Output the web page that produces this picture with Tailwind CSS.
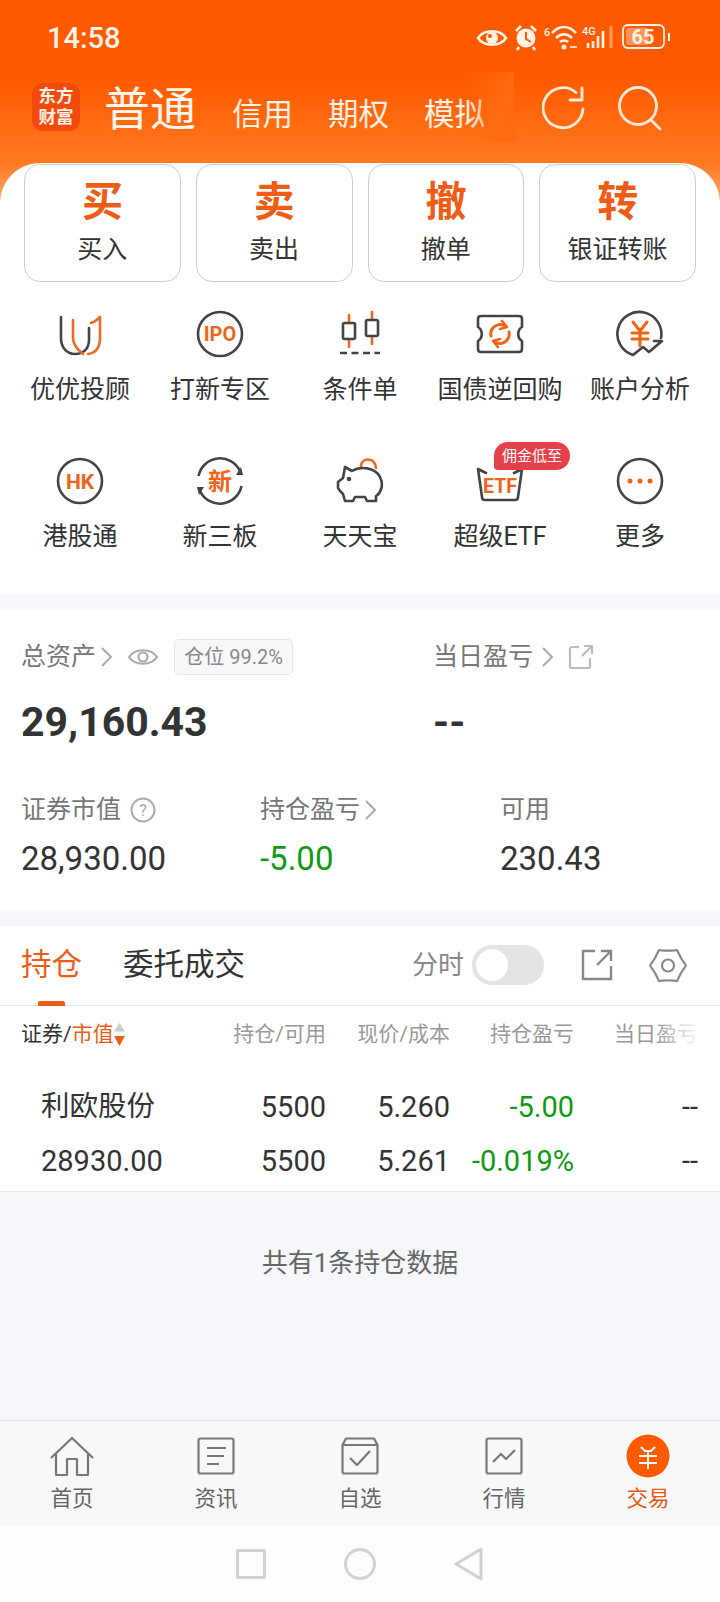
<!DOCTYPE html>
<html lang="en">
  <head>
    <meta charset="UTF-8">
    <meta name="viewport" content="width=device-width, initial-scale=1.0">
    <title>交易</title>
    <script src="https://cdn.jsdelivr.net/npm/@tailwindcss/browser@4"></script>
  </head>

  <body class="bg-white">
    <div class="flex flex-col w-[720px] h-[1602px] overflow-hidden bg-[#f6f7fa] text-[#333] font-['Roboto','Noto_Sans_CJK_SC',sans-serif]">

      <!-- Orange header -->
      <header class="h-[200px] shrink-0 bg-[linear-gradient(180deg,#ff5900_0%,#ff5a00_40%,#ff7a22_82%,#ffa868_100%)] text-white">
        <!-- status bar -->
        <div class="flex items-center justify-between h-[75px] pl-[47px] pr-[48px]">
          <span class="text-[29px] leading-[34px] font-medium text-[#fff3e8]">14:58</span>
          <svg class="w-[200px] h-[32px]" viewBox="472 22 200 32" fill="none" stroke="#fff3e8" stroke-width="2.6">
            <path d="M478 38C484 29 500 29 506 38C500 47 484 47 478 38Z"/>
            <circle cx="492" cy="38" r="6" fill="#fff3e8" stroke="none"/>
            <circle cx="490" cy="36" r="2" fill="#ff5a00" stroke="none"/>
            <circle cx="526" cy="38" r="9.5" fill="#fff3e8" stroke="none"/>
            <path d="M526 32V39L531 42" stroke="#ff5a00" stroke-width="2"/>
            <path d="M516 31L521 26M536 31L531 26M519 47L517 50M533 47L535 50"/>
            <text x="544" y="36" font-size="11" font-weight="500" fill="#fff3e8" stroke="none">6</text>
            <path d="M552 33C559 25 569 25 576 33M556 38C561 33 567 33 572 38M560 42C562 40 566 40 568 42"/>
            <circle cx="564" cy="47" r="2.5" fill="#fff3e8" stroke="none"/>
            <path d="M570 47H577" stroke-width="1.6"/>
            <text x="582" y="35" font-size="11" font-weight="500" fill="#fff3e8" stroke="none">4G</text>
            <path d="M588 43V48M593 41V48M598 36V48M603 31V48"/>
            <path d="M611 26V48" stroke="#ff9a60" stroke-width="3"/>
            <rect x="623" y="25" width="41" height="23" rx="5" stroke-width="1.8"/>
            <rect x="626" y="28" width="23" height="17" rx="3" fill="#ff9258" stroke="none"/>
            <text x="643" y="44" text-anchor="middle" font-size="20" font-weight="700" fill="#fff3e8" stroke="none">65</text>
            <path d="M669 33V41" stroke-width="2"/>
          </svg>
        </div>
        <!-- account type tabs -->
        <div class="flex items-center h-[70px] mt-[-3px] pl-[32px]">
          <div class="flex flex-col items-center justify-center w-[48px] h-[48px] rounded-[11px] bg-[#f24a0c] text-[17.5px] leading-[21px] font-bold text-[#fff1e4]">
            <span>东方</span>
            <span>财富</span>
          </div>
          <div class="relative flex items-end w-[410px] h-[70px] ml-[24px] overflow-hidden">
            <span class="text-[46px] leading-[66px] w-[128px] shrink-0 text-[#fff6ec]">普通</span>
            <span class="text-[30.5px] leading-[54px] w-[96px] shrink-0 text-[#fff1e4]">信用</span>
            <span class="text-[30.5px] leading-[54px] w-[96px] shrink-0 text-[#fff1e4]">期权</span>
            <span class="text-[30.5px] leading-[54px] w-[80px] shrink-0 text-[#fff1e4]">模拟</span>
            <div class="absolute right-0 top-0 bottom-0 w-[46px] bg-gradient-to-r from-[#ff6a10]/0 to-[#ff6a10]"></div>
          </div>
          <svg class="ml-[28px] w-[120px] h-[50px]" viewBox="562 92 120 50" fill="none" stroke="#fdebd8" stroke-width="2.8" stroke-linecap="round" stroke-linejoin="round">
            <path d="M603 119A20 20 0 1 1 596 102.500"/>
            <path d="M602 98V110H590"/>
            <circle cx="658" cy="116" r="18.500"/>
            <path d="M671 130L680 139"/>
          </svg>
        </div>
      </header>

      <!-- Trade buttons and feature grid -->
      <section class="relative -mt-[37px] h-[430px] shrink-0 rounded-t-[40px] bg-white">
        <div class="grid grid-cols-4 gap-[15px] px-[24px] pt-[1px]">
          <button class="flex flex-col items-center h-[118px] rounded-[16px] border border-[#cfcfcf] bg-white">
            <span class="mt-[9px] text-[41px] leading-[56px] font-bold text-[#ee5c16]">买</span>
            <span class="mt-[3px] text-[25px] leading-[34px] text-[#333]">买入</span>
          </button>
          <button class="flex flex-col items-center h-[118px] rounded-[16px] border border-[#cfcfcf] bg-white">
            <span class="mt-[9px] text-[41px] leading-[56px] font-bold text-[#ee5c16]">卖</span>
            <span class="mt-[3px] text-[25px] leading-[34px] text-[#333]">卖出</span>
          </button>
          <button class="flex flex-col items-center h-[118px] rounded-[16px] border border-[#cfcfcf] bg-white">
            <span class="mt-[9px] text-[41px] leading-[56px] font-bold text-[#ee5c16]">撤</span>
            <span class="mt-[3px] text-[25px] leading-[34px] text-[#333]">撤单</span>
          </button>
          <button class="flex flex-col items-center h-[118px] rounded-[16px] border border-[#cfcfcf] bg-white">
            <span class="mt-[9px] text-[41px] leading-[56px] font-bold text-[#ee5c16]">转</span>
            <span class="mt-[3px] text-[25px] leading-[34px] text-[#333]">银证转账</span>
          </button>
        </div>

        <div class="grid grid-cols-5 px-[10px]">
          <!-- 优优投顾 -->
          <div class="flex flex-col items-center h-[147px] pt-[28px]">
            <svg class="w-[48px] h-[48px]" viewBox="56 310 48 48" fill="none" stroke-width="2.6" stroke-linecap="round" stroke-linejoin="round">
              <path d="M61 317V338C61 349 68 354 75 354C83 354 89 349 89 340V328" stroke="#444"/>
              <path d="M73 320V338C73 345 78 350 83 354" stroke="#ee6a20"/>
              <path d="M91 323C95 322 97 320 100 317V338C100 348 95 353 88 354" stroke="#ee6a20"/>
            </svg>
            <span class="mt-[15px] text-[25px] leading-[34px]">优优投顾</span>
          </div>
          <!-- 打新专区 -->
          <div class="flex flex-col items-center h-[147px] pt-[28px]">
            <svg class="w-[48px] h-[48px]" viewBox="196 310 48 48" fill="none">
              <circle cx="220" cy="334" r="22" stroke="#444" stroke-width="2.6"/>
              <text x="220" y="341" text-anchor="middle" font-size="20" font-weight="700" fill="#f0641a">IPO</text>
            </svg>
            <span class="mt-[15px] text-[25px] leading-[34px]">打新专区</span>
          </div>
          <!-- 条件单 -->
          <div class="flex flex-col items-center h-[147px] pt-[28px]">
            <svg class="w-[48px] h-[48px]" viewBox="336 310 48 48" fill="none" stroke-width="2.6">
              <path d="M349 315V323M349 339V347M372 312V320M372 336V344" stroke="#ee6a20" stroke-linecap="round"/>
              <rect x="343" y="323" width="12" height="16" rx="1.500" stroke="#444"/>
              <rect x="366" y="320" width="12" height="16" rx="1.500" stroke="#444"/>
              <path d="M340 353H380" stroke="#444" stroke-dasharray="7 4.500"/>
            </svg>
            <span class="mt-[15px] text-[25px] leading-[34px]">条件单</span>
          </div>
          <!-- 国债逆回购 -->
          <div class="flex flex-col items-center h-[147px] pt-[28px]">
            <svg class="w-[48px] h-[48px]" viewBox="476 310 48 48" fill="none" stroke-width="2.6" stroke-linejoin="round" stroke-linecap="round">
              <path d="M481 316H519Q522 316 522 319V327C517 330 517 338 522 341V349Q522 352 519 352H481Q478 352 478 349V341C483 338 483 330 478 327V319Q478 316 481 316Z" stroke="#444"/>
              <path d="M491 336A9.500 9.500 0 0 1 506 326.500M509 332A9.500 9.500 0 0 1 494 341.500" stroke="#f0641a" stroke-width="3"/>
              <path d="M502 321L507 327L500 329M498 347L493 341L500 339" stroke="#f0641a" stroke-width="2.600"/>
            </svg>
            <span class="mt-[15px] text-[25px] leading-[34px]">国债逆回购</span>
          </div>
          <!-- 账户分析 -->
          <div class="flex flex-col items-center h-[147px] pt-[28px]">
            <svg class="w-[48px] h-[48px]" viewBox="616 310 48 48" fill="none" stroke-width="2.6" stroke-linejoin="round" stroke-linecap="round">
              <path d="M661 338A22 22 0 1 0 633 355L643 347L649 352L662 341H654" stroke="#444"/>
              <path d="M633 322L640 331L647 322M640 331V346M632 333H648M632 339H648" stroke="#f0641a" stroke-width="3"/>
            </svg>
            <span class="mt-[15px] text-[25px] leading-[34px]">账户分析</span>
          </div>
          <!-- 港股通 -->
          <div class="flex flex-col items-center h-[147px] pt-[28px]">
            <svg class="w-[48px] h-[48px]" viewBox="56 456 48 48" fill="none">
              <circle cx="80" cy="480" r="22" stroke="#444" stroke-width="2.6"/>
              <text x="80" y="487.500" text-anchor="middle" font-size="21" font-weight="700" fill="#f0641a">HK</text>
            </svg>
            <span class="mt-[15px] text-[25px] leading-[34px]">港股通</span>
          </div>
          <!-- 新三板 -->
          <div class="flex flex-col items-center h-[147px] pt-[28px]">
            <svg class="w-[48px] h-[48px]" viewBox="196 456 48 48" fill="none" stroke="#444" stroke-width="2.6">
              <path d="M198.500 475A22 22 0 0 1 240 470M241.500 485A22 22 0 0 1 200 490"/>
              <path d="M236 474L243 474L241 466ZM204 486L197 486L199 494Z" fill="#444" stroke="none"/>
              <text x="220" y="489" text-anchor="middle" font-size="24" font-weight="700" fill="#f0641a" stroke="none">新</text>
            </svg>
            <span class="mt-[15px] text-[25px] leading-[34px]">新三板</span>
          </div>
          <!-- 天天宝 -->
          <div class="flex flex-col items-center h-[147px] pt-[28px]">
            <svg class="w-[48px] h-[48px]" viewBox="336 456 48 48" fill="none" stroke-width="2.6" stroke-linejoin="round" stroke-linecap="round">
              <path d="M361 465C362 456 375 456 376 467" stroke="#f0641a"/>
              <path d="M345 466L352 470C360 465 375 466 380 476C384 484 381 492 376 495V500H367L365 496H355L353 500H345L343 493C341 491 339 489 338 487L338 481L343 477Z" stroke="#444"/>
              <circle cx="349" cy="478" r="2.300" fill="#444"/>
            </svg>
            <span class="mt-[15px] text-[25px] leading-[34px]">天天宝</span>
          </div>
          <!-- 超级ETF, the red badge lies over the icon -->
          <div class="relative flex flex-col items-center h-[147px] pt-[28px]">
            <svg class="w-[48px] h-[48px]" viewBox="476 456 48 48" fill="none" stroke-width="2.6" stroke-linejoin="round" stroke-linecap="round">
              <path d="M478 468L486 472M514 472L522 468M478 468L482 496Q482 499 485 499H515Q518 499 518 496L522 468" stroke="#444"/>
              <text x="500" y="492" text-anchor="middle" font-size="19.500" font-weight="700" fill="#f0641a" stroke="none">ETF</text>
            </svg>
            <span class="mt-[15px] text-[25px] leading-[34px]">超级ETF</span>
            <span class="absolute left-[64px] top-[13px] flex items-center justify-center w-[76px] h-[28px] rounded-[14px] rounded-bl-[4px] bg-[#e5404a] text-[15px] leading-none text-white">佣金低至</span>
          </div>
          <!-- 更多 -->
          <div class="flex flex-col items-center h-[147px] pt-[28px]">
            <svg class="w-[48px] h-[48px]" viewBox="616 456 48 48" fill="none">
              <circle cx="640" cy="480" r="22" stroke="#444" stroke-width="2.6"/>
              <circle cx="630" cy="480" r="2.500" fill="#f0641a"/>
              <circle cx="640" cy="480" r="2.500" fill="#f0641a"/>
              <circle cx="650" cy="480" r="2.500" fill="#f0641a"/>
            </svg>
            <span class="mt-[15px] text-[25px] leading-[34px]">更多</span>
          </div>
        </div>
      </section>

      <!-- Assets -->
      <section class="mt-[17px] h-[300px] shrink-0 bg-white pt-[30px]">
        <div class="flex h-[34px] items-center pl-[21px]">
          <div class="flex items-center w-[412px]">
            <span class="text-[25px] leading-[34px] text-[#777]">总资产</span>
            <svg class="ml-[3px] w-[14px] h-[22px]" viewBox="0 0 14 22" fill="none" stroke="#aaa" stroke-width="2"><path d="M3 2L12 11L3 20"/></svg>
            <svg class="ml-[14px] w-[32px] h-[24px]" viewBox="0 0 32 24" fill="none" stroke="#aaa" stroke-width="2.200"><path d="M2 12C8 3 24 3 30 12C24 21 8 21 2 12Z"/><circle cx="16" cy="12" r="4.500"/></svg>
            <span class="flex items-center justify-center ml-[15px] w-[119px] h-[36px] rounded-[5px] border border-[#e6e6e6] bg-[#f7f8fa] text-[20px] leading-none text-[#888]">仓位 99.2%</span>
          </div>
          <span class="text-[25px] leading-[34px] text-[#777]">当日盈亏</span>
          <svg class="ml-[7px] w-[14px] h-[22px]" viewBox="0 0 14 22" fill="none" stroke="#aaa" stroke-width="2"><path d="M3 2L12 11L3 20"/></svg>
          <svg class="ml-[14px] w-[26px] h-[26px]" viewBox="0 0 26 26" fill="none" stroke="#bbb" stroke-width="2.200" stroke-linejoin="round"><path d="M11 3H4Q2 3 2 5V22Q2 24 4 24H20Q22 24 22 22V14M14 12L24 2M16 2H24V10"/></svg>
        </div>
        <div class="flex h-[48px] mt-[24px] items-center pl-[21px]">
          <span class="w-[412px] text-[41px] leading-[48px] font-bold text-[#333]">29,160.43</span>
          <span class="text-[41px] leading-[48px] font-bold text-[#333]">--</span>
        </div>
        <div class="grid grid-cols-[239px_240px_1fr] pl-[21px] mt-[47px]">
          <div class="flex items-center h-[34px]">
            <span class="text-[25px] leading-[34px] text-[#777]">证券市值</span>
            <svg class="ml-[9px] w-[26px] h-[26px]" viewBox="0 0 26 26" fill="none"><circle cx="13" cy="13" r="11.500" stroke="#aaa" stroke-width="2"/><text x="13" y="19" text-anchor="middle" font-size="16" fill="#aaa">?</text></svg>
          </div>
          <div class="flex items-center h-[34px]">
            <span class="text-[25px] leading-[34px] text-[#777]">持仓盈亏</span>
            <svg class="ml-[3px] w-[14px] h-[22px]" viewBox="0 0 14 22" fill="none" stroke="#aaa" stroke-width="2"><path d="M3 2L12 11L3 20"/></svg>
          </div>
          <span class="h-[34px] text-[25px] leading-[34px] text-[#777]">可用</span>
          <span class="mt-[11px] text-[33px] leading-[42px] text-[#333]">28,930.00</span>
          <span class="mt-[11px] text-[33px] leading-[42px] text-[#0f9a14]">-5.00</span>
          <span class="mt-[11px] text-[33px] leading-[42px] text-[#333]">230.43</span>
        </div>
      </section>

      <!-- Holdings -->
      <section class="mt-[16px] shrink-0 bg-white">
        <div class="relative flex items-center h-[80px] pb-[1px] pl-[21px] border-b border-[#e4e4e4]">
          <span class="w-[102px] text-[30.5px] leading-[40px] text-[#ee5c16]">持仓</span>
          <span class="text-[30.5px] leading-[40px] text-[#333]">委托成交</span>
          <span class="ml-auto text-[26px] leading-[36px] text-[#888]">分时</span>
          <div class="flex items-center ml-[8px] w-[72px] h-[40px] rounded-full bg-[#e4e4e4] pl-[4px]">
            <div class="w-[32px] h-[32px] rounded-full bg-white"></div>
          </div>
          <svg class="ml-[36px] w-[34px] h-[34px]" viewBox="0 0 34 34" fill="none" stroke="#888" stroke-width="2.400"><path d="M15 3H3V31H31V18M17 17L31 3M21 3H31V13"/></svg>
          <svg class="ml-[35px] mr-[33px] w-[38px] h-[38px]" viewBox="648 946 38 38" fill="none" stroke="#888" stroke-width="2.200" stroke-linejoin="round"><path d="M685 965.500L680 958L676 950Q671 951 667 950.500Q663 951 658 950L654 958L649 965.500L654 973L658 981Q663 980 667 980.500Q671 980 676 981L680 973Z"/><circle cx="667" cy="965.500" r="6"/></svg>
          <div class="absolute left-[38px] bottom-[-1px] w-[27px] h-[5px] rounded-t-[2px] bg-[#ee5c16]"></div>
        </div>

        <div class="relative grid grid-cols-[181px_124px_124px_124px_124px] items-center h-[56px] px-[21px] text-right text-[21px] leading-[30px] text-[#999]">
          <div class="flex items-center text-left text-[#333]">
            <span>证券/</span><span class="text-[#ee5c16]">市值</span>
            <svg class="w-[11px] h-[24px]" viewBox="0 0 11 24" ><path d="M5.500 1L11 9.500H0Z" fill="#ccc"/><path d="M5.500 24L11 14H0Z" fill="#ee5c16"/></svg>
          </div>
          <span>持仓/可用</span>
          <span>现价/成本</span>
          <span>持仓盈亏</span>
          <span>当日盈亏</span>
          <div class="absolute right-[20px] top-0 bottom-0 w-[45px] bg-gradient-to-r from-white/0 to-white"></div>
        </div>

        <div class="grid grid-cols-[181px_124px_124px_124px_124px] h-[130px] px-[21px] pt-[21px] border-b border-[#eaeaea] text-right text-[29px] leading-[48px] text-[#333]">
          <span class="pl-[20px] text-left text-[28.500px]">利欧股份</span>
          <span>5500</span>
          <span>5.260</span>
          <span class="text-[#0f9a14]">-5.00</span>
          <span>--</span>
          <span class="pl-[20px] text-left">28930.00</span>
          <span>5500</span>
          <span>5.261</span>
          <span class="text-[#0f9a14]">-0.019%</span>
          <span>--</span>
        </div>
      </section>

      <!-- Empty area -->
      <div class="flex-1 flex justify-center pt-[53px] text-[26px] leading-[36px] text-[#666]">共有1条持仓数据</div>

      <!-- Bottom tabs -->
      <nav class="grid grid-cols-5 h-[105px] shrink-0 border-t border-[#e4e5ea] bg-[#f8f8fb] text-[21.500px] leading-[30px] text-[#666]">
        <div class="flex flex-col items-center pt-[13px]">
          <svg class="w-[44px] h-[44px]" viewBox="50 1434 44 44" fill="none" stroke="#777" stroke-width="2.200" stroke-linejoin="round"><path d="M51 1458L72 1438L93 1458M56 1454V1475H67V1459H77V1475H88V1454"/></svg>
          <span class="mt-[6px]">首页</span>
        </div>
        <div class="flex flex-col items-center pt-[13px]">
          <svg class="w-[44px] h-[44px]" viewBox="194 1434 44 44" fill="none" stroke="#777" stroke-width="2.200" stroke-linejoin="round"><rect x="198.500" y="1438.500" width="35" height="35" rx="2"/><path d="M207 1448H226M207 1456H224M207 1464H219"/></svg>
          <span class="mt-[6px]">资讯</span>
        </div>
        <div class="flex flex-col items-center pt-[13px]">
          <svg class="w-[44px] h-[44px]" viewBox="338 1434 44 44" fill="none" stroke="#777" stroke-width="2.200" stroke-linejoin="round"><path d="M342.500 1445L346 1438.500H374L377.500 1445V1471.500Q377.500 1473.500 375.500 1473.500H344.500Q342.500 1473.500 342.500 1471.500ZM342.500 1445H377.500M350 1458L357 1465L370 1451"/></svg>
          <span class="mt-[6px]">自选</span>
        </div>
        <div class="flex flex-col items-center pt-[13px]">
          <svg class="w-[44px] h-[44px]" viewBox="482 1434 44 44" fill="none" stroke="#777" stroke-width="2.200" stroke-linejoin="round"><rect x="486.500" y="1438.500" width="35" height="35" rx="2"/><path d="M493 1462L501 1454L506 1459L515 1450"/></svg>
          <span class="mt-[6px]">行情</span>
        </div>
        <div class="flex flex-col items-center pt-[13px] text-[#e8590c]">
          <svg class="w-[44px] h-[44px]" viewBox="625 1434 44 44" fill="none" stroke="#fff" stroke-width="2"><circle cx="647" cy="1456" r="21.500" fill="#ff5a00" stroke="none"/><path d="M640 1447L644 1451H650L654 1447M638 1456H656M638 1463H656M647 1451V1469"/></svg>
          <span class="mt-[6px]">交易</span>
        </div>
      </nav>

      <!-- System nav -->
      <div class="flex items-center justify-center gap-[78px] h-[77px] shrink-0 bg-[#fdfdfd]">
        <div class="w-[30px] h-[30px] rounded-[2px] border-[3px] border-[#d2d2d2]"></div>
        <div class="w-[32px] h-[32px] rounded-full border-[3px] border-[#d2d2d2]"></div>
        <svg class="w-[30px] h-[34px]" viewBox="0 0 30 34" fill="none" stroke="#d2d2d2" stroke-width="3" stroke-linejoin="round"><path d="M27 2V32L2 17Z"/></svg>
      </div>
    </div>
  </body>
</html>
